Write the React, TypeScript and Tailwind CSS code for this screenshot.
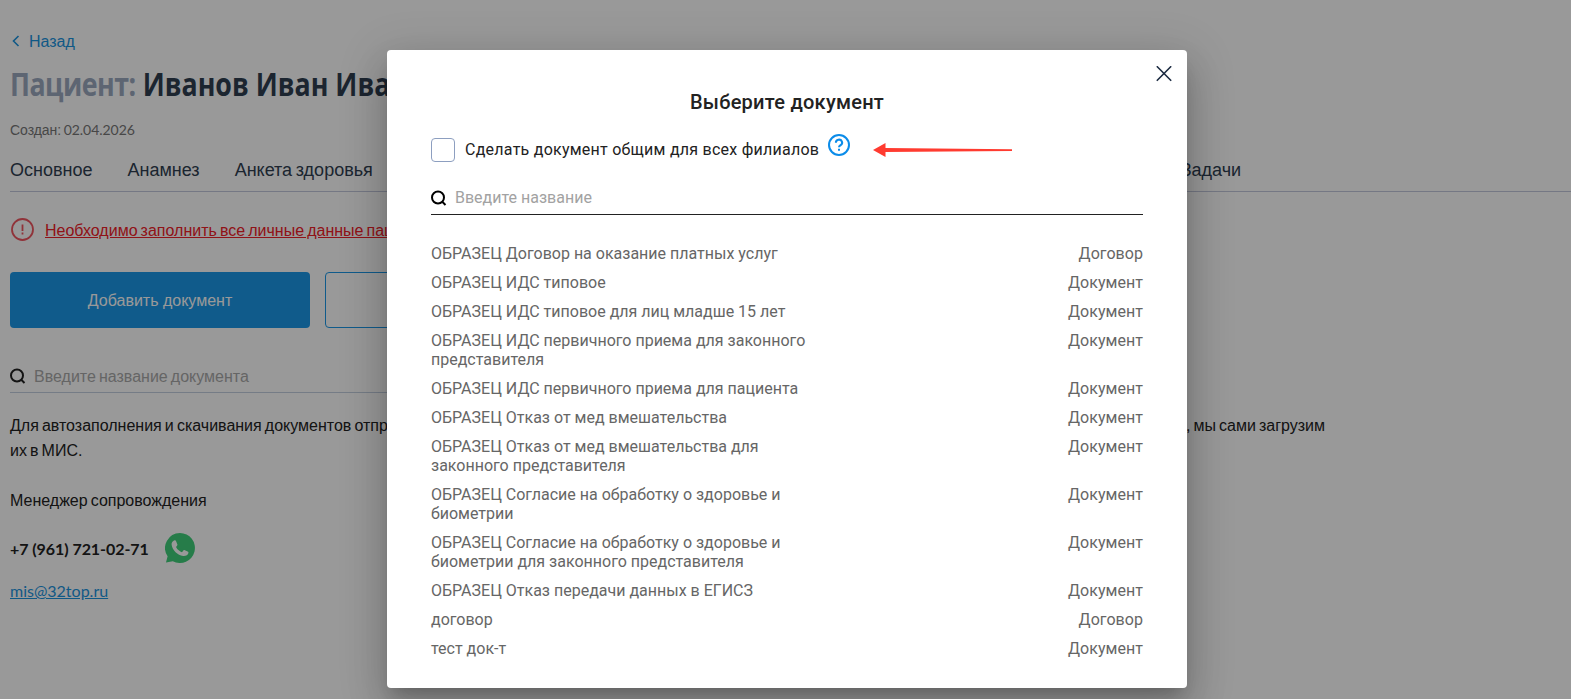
import { useState } from 'react'

type DocumentTemplate = {
  name: string
  type: string
}

const documents: DocumentTemplate[] = [
  { name: 'ОБРАЗЕЦ Договор на оказание платных услуг', type: 'Договор' },
  { name: 'ОБРАЗЕЦ ИДС типовое', type: 'Документ' },
  { name: 'ОБРАЗЕЦ ИДС типовое для лиц младше 15 лет', type: 'Документ' },
  { name: 'ОБРАЗЕЦ ИДС первичного приема для законного представителя', type: 'Документ' },
  { name: 'ОБРАЗЕЦ ИДС первичного приема для пациента', type: 'Документ' },
  { name: 'ОБРАЗЕЦ Отказ от мед вмешательства', type: 'Документ' },
  { name: 'ОБРАЗЕЦ Отказ от мед вмешательства для законного представителя', type: 'Документ' },
  { name: 'ОБРАЗЕЦ Согласие на обработку о здоровье и биометрии', type: 'Документ' },
  { name: 'ОБРАЗЕЦ Согласие на обработку о здоровье и биометрии для законного представителя', type: 'Документ' },
  { name: 'ОБРАЗЕЦ Отказ передачи данных в ЕГИСЗ', type: 'Документ' },
  { name: 'договор', type: 'Договор' },
  { name: 'тест док-т', type: 'Документ' },
]

function SearchIcon() {
  return (
    <svg className="w-4 h-4 shrink-0" viewBox="0 0 16 16" fill="none" stroke="currentColor" strokeWidth="2">
      <circle cx="7" cy="7.5" r="6" />
      <path d="M11 11.5l3.5 3.5" />
    </svg>
  )
}

function PatientPage() {
  return (
    <div className="h-[699px] overflow-hidden pl-2.5 bg-white font-['Liberation_Sans',sans-serif] [word-spacing:-0.085em] text-[#222]">
      {/* Back link */}
      <a className="flex items-center h-6 mt-[30px] text-base text-[#1c94e0]">
        <svg className="w-3 h-3 mr-[7px] mb-0.5" viewBox="0 0 12 12" fill="none" stroke="currentColor" strokeWidth="1.6">
          <path d="M8.5 1L3.5 6l5 5" />
        </svg>
        Назад
      </a>

      {/* Header */}
      <h1 className="mt-2.5 h-10 leading-10 text-[32px] font-bold whitespace-nowrap text-[#2f3e51] font-['Open_Sans',sans-serif] [word-spacing:0] origin-left scale-x-[0.836]">
        <span className="text-[#9ba9bf] tracking-[-0.6px]">Пациент:</span> Иванов Иван Иванович
      </h1>
      <p className="mt-4 h-5 leading-5 text-sm text-[#777] tracking-[-0.04px]">
        Создан: <span className="font-[Lato]">02.04.2026</span>
      </p>

      {/* Tabs */}
      <nav className="mt-[17px] h-[35px] flex gap-[35px] border-b border-[#c3c8dc] text-lg leading-[26px] text-[#2f3e51] whitespace-nowrap">
        <span>Основное</span>
        <span>Анамнез</span>
        <span className="w-[911px]">Анкета здоровья</span>
        <span>Задачи</span>
      </nav>

      {/* Warning */}
      <div className="mt-[26px] h-6 flex items-center">
        <svg className="w-6 h-6 mr-[11px] text-[#f05560]" viewBox="0 0 24 24" fill="none" stroke="currentColor" strokeWidth="1.8">
          <circle cx="12.5" cy="11.5" r="10.5" />
          <path d="M12.5 6.5v6.5M12.5 14.5v2" />
        </svg>
        <a className="pt-0.5 underline text-base whitespace-nowrap text-[#f02028]">
          Необходимо заполнить все личные данные пациента
        </a>
      </div>

      {/* Actions */}
      <div className="mt-[30px] flex gap-[15px]">
        <button className="w-[300px] h-14 pt-0.5 rounded bg-[#1c98e8] text-white text-base">Добавить документ</button>
        <button className="w-[300px] h-14 rounded border border-[#1c98e8]" />
      </div>

      {/* Search */}
      <div className="mt-8 h-[33px] w-[600px] flex items-center gap-2 border-b border-[#c3cfdf]">
        <SearchIcon />
        <span className="pt-0.5 text-base text-[#a9a9a9]">Введите название документа</span>
      </div>

      <p className="mt-5 w-[1315px] text-base leading-[25px]">
        <span className="flex justify-between">
          <span>Для автозаполнения и скачивания документов отправьте</span>
          <span>, мы сами загрузим</span>
        </span>
        их в МИС.
      </p>
      <p className="mt-[25px] text-base leading-[25px]">Менеджер сопровождения</p>

      {/* Contacts */}
      <div className="mt-5 h-[30px] flex items-center gap-4 font-[Lato] [word-spacing:0]">
        <span className="pt-0.5 text-base font-bold tracking-[-0.06px]">+7 (961) 721-02-71</span>
        <svg className="w-[30px] h-[30px]" viewBox="0 0 30 30">
          <path d="M15 0a15 15 0 1 1-7.2 28.2L1 29.4l1.6-6.1A15 15 0 0 1 15 0z" fill="#40cf7a" />
          <path
            d="M9.5 7.2c-1.8.6-3.2 2.4-2.9 4.6.8 5.4 6 10.7 11.5 11.1 2.7.2 4.9-.8 5.3-2.9.2-1-.1-1.3-.8-1.6l-2.7-1.2c-.7-.3-1.1-.2-1.5.3l-1 1.3c-.3.4-.7.4-1.2.2-2.1-.9-3.8-2.4-4.9-4.4-.3-.5-.2-.8.1-1.2l.8-1c.3-.4.3-.8.1-1.2l-1.2-2.9c-.4-1-.9-1.2-1.6-1.1z"
            fill="#fff"
          />
        </svg>
      </div>
      <a className="block mt-4 text-base leading-6 underline font-[Lato] text-[#1c94e0]">mis@32top.ru</a>
    </div>
  )
}

export default function App() {
  const [isShared, setIsShared] = useState(false)

  return (
    <div className="relative h-[699px] overflow-hidden">
      <PatientPage />

      {/* Modal */}
      <div className="absolute inset-0 bg-black/40 flex justify-center items-start pt-[50px] pl-[3px]">
        <div className="relative w-[800px] h-[638px] rounded bg-white px-11 pt-10 font-[Roboto,sans-serif] shadow-[0_11px_15px_-7px_rgba(0,0,0,0.2),0_24px_38px_3px_rgba(0,0,0,0.14),0_9px_46px_8px_rgba(0,0,0,0.12)]">
          <button className="absolute top-4 right-[15px] text-[#1b2a41]">
            <svg className="w-4 h-4" viewBox="0 0 16 16" fill="none" stroke="currentColor" strokeWidth="1.6">
              <path d="M.8.3l14.4 14.4M15.2.3L.8 14.7" />
            </svg>
          </button>

          <h2 className="h-6 leading-6 text-center text-xl font-medium tracking-[0.25px] text-[#222]">Выберите документ</h2>

          {/* Shared checkbox */}
          <div className="mt-5 h-8 flex items-center">
            <button
              onClick={() => setIsShared(!isShared)}
              className="w-6 h-6 rounded-[4px] border border-[#8d9fc0]"
            />
            <span className="ml-2.5 text-base tracking-[0.25px] text-[#222]">Сделать документ общим для всех филиалов</span>
            <svg className="ml-[9px] mb-2.5 w-[22px] h-[22px]" viewBox="0 0 24 24" fill="none" stroke="#0b8ce9" strokeWidth="2.2">
              <circle cx="12" cy="12" r="10.9" />
              <path d="M8.6 9.6a3.4 3.2 0 1 1 5.2 2.5c-1.1.8-1.8 1.1-1.8 2.3M12 16.2v2.2" />
            </svg>
            <svg className="ml-[23px] w-[140px] h-4" viewBox="0 0 140 16" fill="#ff3b30">
              <path d="M0 8L12.5 1v5L139 7.3v1.6L12.5 10v5z" />
            </svg>
          </div>

          {/* Search */}
          <div className="mt-4 h-[33px] flex items-center gap-2 border-b border-[#222]">
            <SearchIcon />
            <span className="text-base text-[#a2a2a2]">Введите название</span>
          </div>

          <ul className="mt-[29px] flex flex-col gap-2.5 text-base leading-[19px] text-[#666]">
            {documents.map((doc) => (
              <li key={doc.name} className="flex justify-between">
                <span className="w-[390px]">{doc.name}</span>
                <span className="tracking-[0.05px]">{doc.type}</span>
              </li>
            ))}
          </ul>
        </div>
      </div>
    </div>
  )
}
